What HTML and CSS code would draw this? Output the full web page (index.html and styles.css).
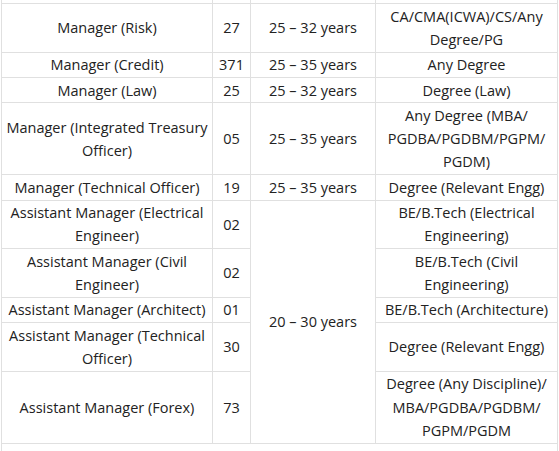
FILE: index.html
```html
<!DOCTYPE html>
<html lang="en">
<head>
<meta charset="utf-8">
<title>Vacancies</title>
<link rel="stylesheet" href="styles.css">
</head>
<body>
<div class="wrap">
<table class="posts">
  <colgroup>
    <col class="c-post">
    <col class="c-num">
    <col class="c-age">
    <col class="c-qual">
  </colgroup>
  <tbody>
    <tr class="cut"><td></td><td></td><td></td><td></td></tr>
    <tr><td>Manager (Risk)</td><td>27</td><td>25 – 32 years</td><td>CA/CMA(ICWA)/CS/Any<br>Degree/PG</td></tr>
    <tr><td>Manager (Credit)</td><td>371</td><td>25 – 35 years</td><td>Any Degree</td></tr>
    <tr><td>Manager (Law)</td><td>25</td><td>25 – 32 years</td><td>Degree (Law)</td></tr>
    <tr><td>Manager (Integrated Treasury<br>Officer)</td><td>05</td><td>25 – 35 years</td><td>Any Degree (MBA/<br>PGDBA/PGDBM/PGPM/<br>PGDM)</td></tr>
    <tr><td>Manager (Technical Officer)</td><td>19</td><td>25 – 35 years</td><td>Degree (Relevant Engg)</td></tr>
    <tr><td>Assistant Manager (Electrical<br>Engineer)</td><td>02</td><td rowspan="5">20 – 30 years</td><td>BE/B.Tech (Electrical<br>Engineering)</td></tr>
    <tr><td>Assistant Manager (Civil<br>Engineer)</td><td>02</td><td>BE/B.Tech (Civil<br>Engineering)</td></tr>
    <tr><td>Assistant Manager (Architect)</td><td>01</td><td>BE/B.Tech (Architecture)</td></tr>
    <tr><td>Assistant Manager (Technical<br>Officer)</td><td>30</td><td>Degree (Relevant Engg)</td></tr>
    <tr><td>Assistant Manager (Forex)</td><td>73</td><td>Degree (Any Discipline)/<br>MBA/PGDBA/PGDBM/<br>PGPM/PGDM</td></tr>
    <tr class="tail"><td colspan="4"></td></tr>
  </tbody>
</table>
</div>
</body>
</html>
```

FILE: styles.css
```css
html, body {
  margin: 0;
  padding: 0;
  background: #ffffff;
}

.wrap {
  padding-left: 1px;
}

.posts {
  border-collapse: collapse;
  table-layout: fixed;
  width: 556px;
  font-family: "Open Sans", "Noto Sans", sans-serif;
  font-size: 14.5px;
  line-height: 23.2px;
  color: #222222;
}

.c-post { width: 211px; }
.c-num { width: 38px; }
.c-age { width: 125px; }
.c-qual { width: 182px; }

.posts td {
  border: 1px solid #e0e0e0;
  padding: 0.6px 2px;
  text-align: center;
  vertical-align: middle;
  white-space: nowrap;
}

.posts .cut td {
  height: 3px;
  padding: 0;
  line-height: 0;
  border-top-style: hidden;
}

.posts .tail td {
  height: 30px;
  padding: 0;
}
```
